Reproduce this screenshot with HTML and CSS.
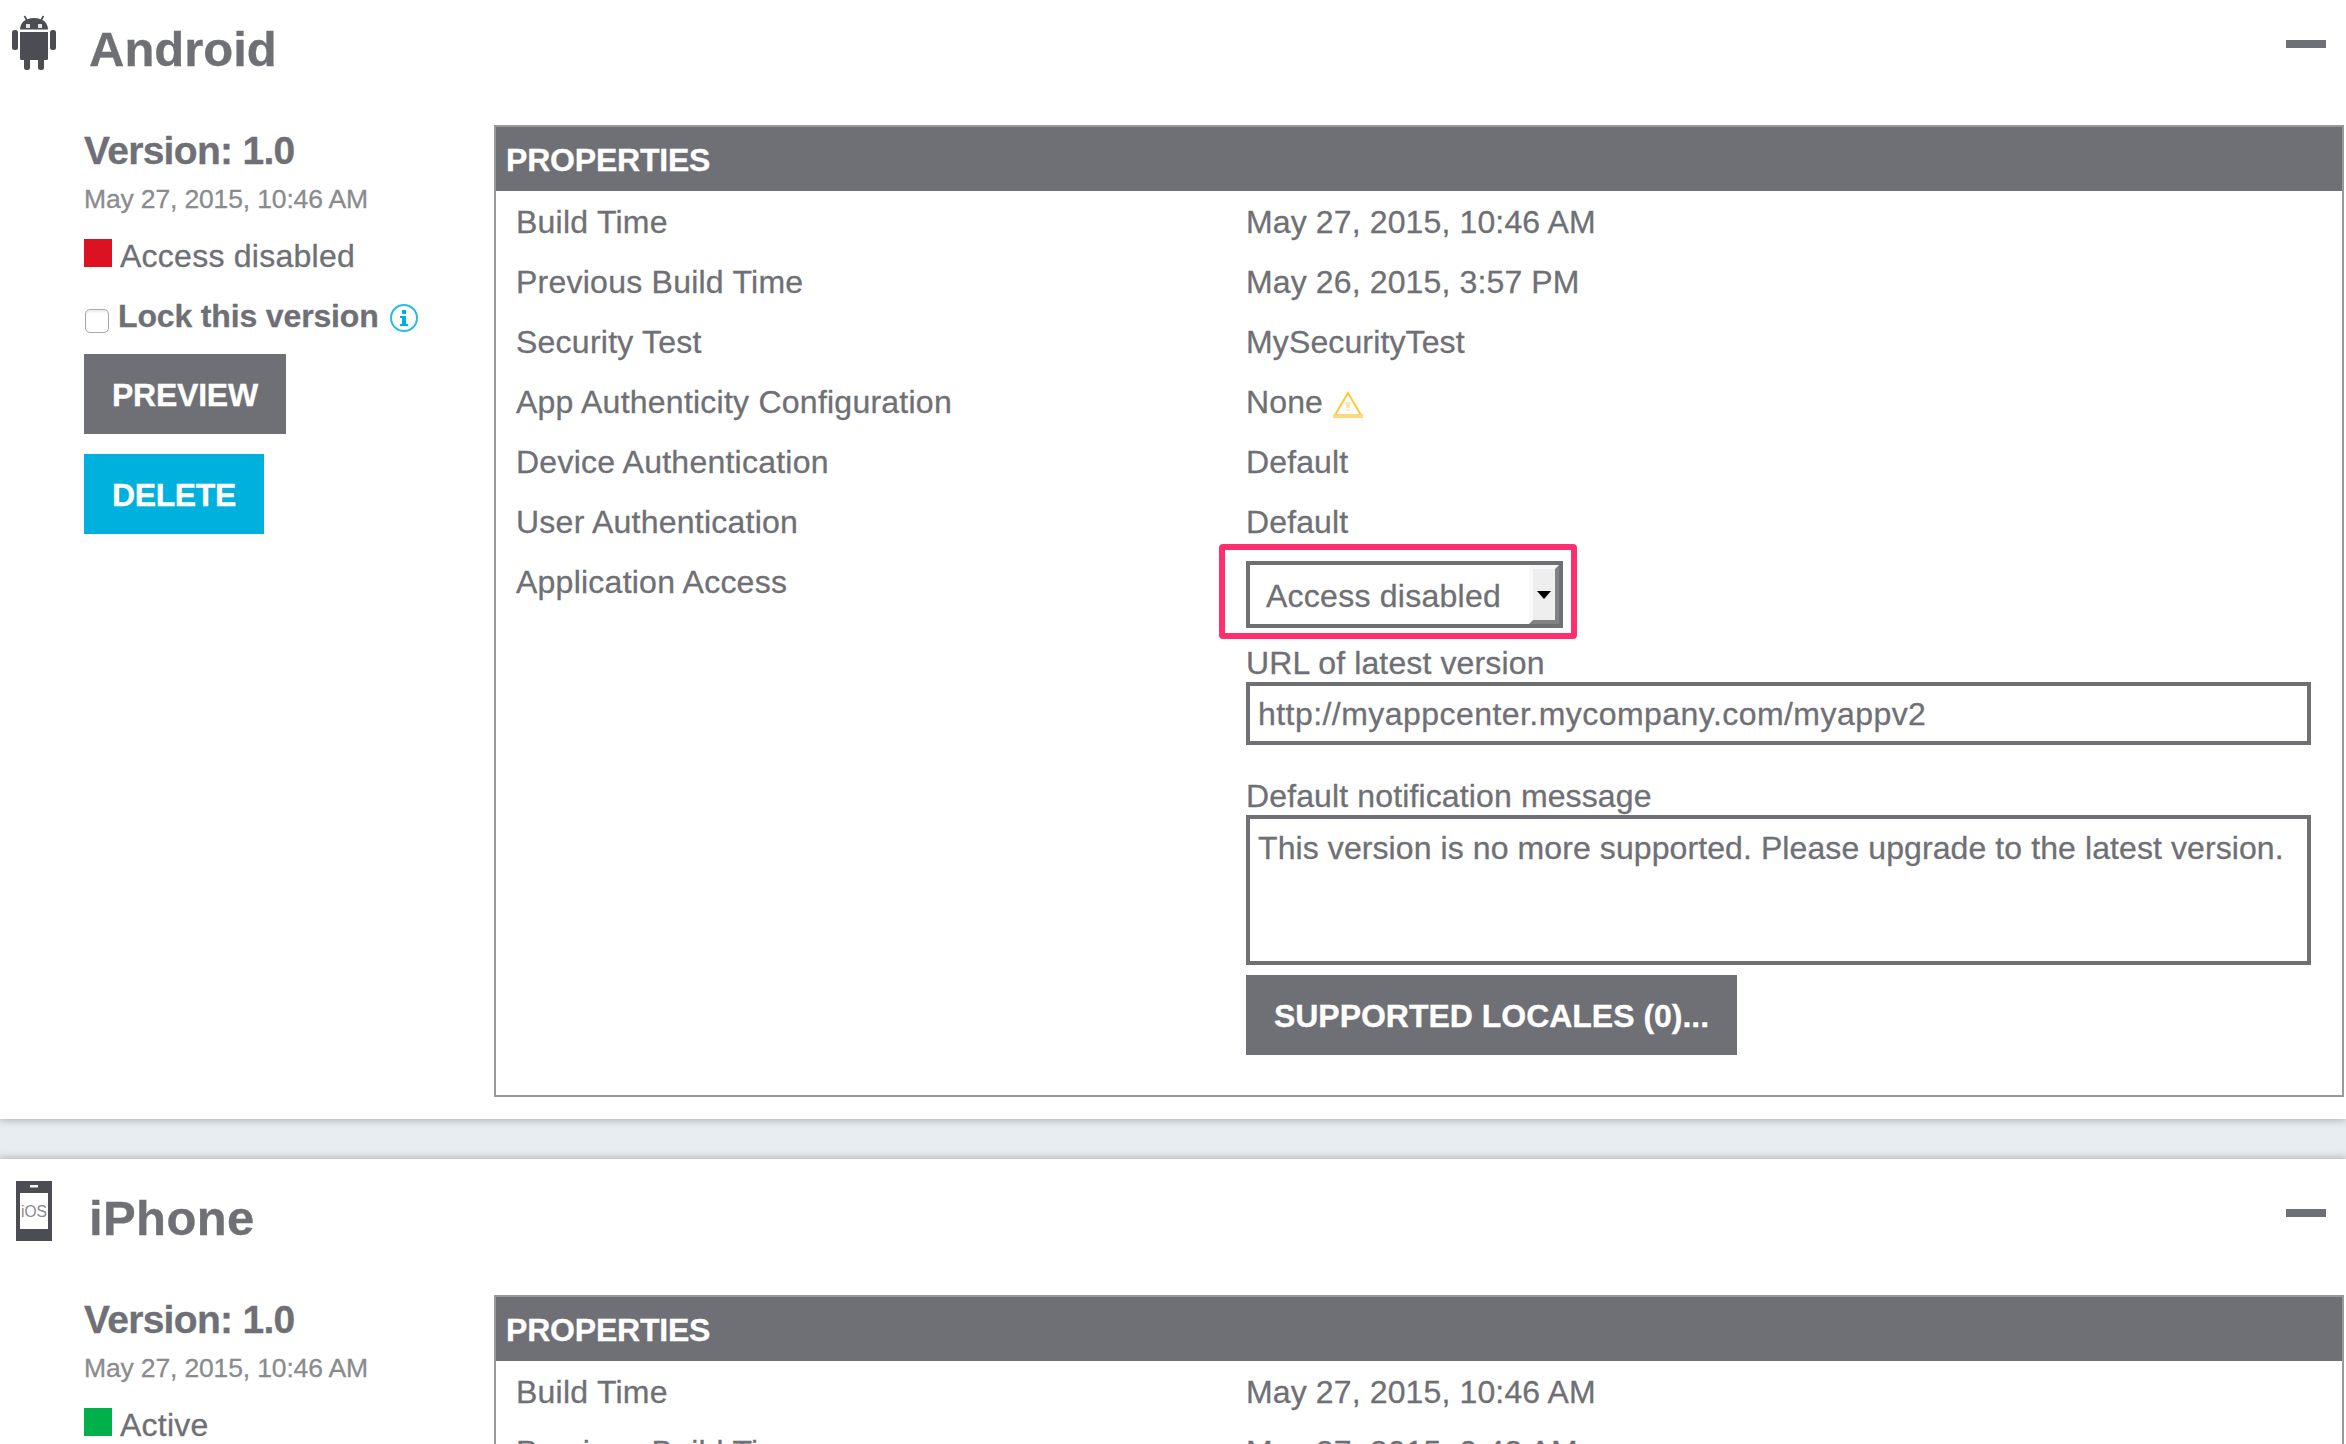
FILE: index.html
```
<!DOCTYPE html>
<html lang="en">
<head>
<meta charset="utf-8">
<title>Applications</title>
<link rel="stylesheet" href="styles.css">
</head>
<body>
<section class="platform platform-android">
  <header class="platform-head">
    <svg class="platform-icon" width="48" height="60" viewBox="0 0 48 60">
      <g fill="#4c4d53">
        <path d="M10 25.500C10 19 15 14 24 14s14 5 14 11.500z"/>
        <path d="M14.500 12l2.800 5M33.500 12l-2.800 5" stroke="#4c4d53" stroke-width="1.600"/>
        <path d="M10 28h28v26.500q0 1.500-1.500 1.500h-25Q10 56 10 54.500z"/>
        <rect x="2" y="26" width="6" height="20" rx="2.500"/>
        <rect x="40" y="26" width="6" height="20" rx="2.500"/>
        <rect x="14" y="52" width="6" height="14" rx="2.500"/>
        <rect x="28" y="52" width="6" height="14" rx="2.500"/>
      </g>
      <rect x="16" y="20" width="4" height="4" fill="#e4e4e5"/>
      <rect x="28" y="20" width="4" height="4" fill="#e4e4e5"/>
    </svg>
    <h2 class="platform-name">Android</h2>
    <span class="collapse"></span>
  </header>
  <div class="platform-body">
    <aside class="version">
      <h3 class="version-name">Version: 1.0</h3>
      <p class="version-date">May 27, 2015, 10:46 AM</p>
      <p class="status"><span class="swatch swatch-disabled"></span>Access disabled</p>
      <div class="lock">
        <span class="checkbox"></span>
        <span class="lock-label">Lock this version</span>
        <svg class="info" width="30" height="30" viewBox="0 0 30 30">
          <circle cx="15" cy="15" r="13" fill="none" stroke="#2bbbe2" stroke-width="2"/>
          <path d="M13 7h4v4h-4zM11 13h6v8h2v2h-8v-2h2v-6h-2z" fill="#00b0dd"/>
        </svg>
      </div>
      <button class="btn">PREVIEW</button>
      <button class="btn btn-primary">DELETE</button>
    </aside>
    <div class="panel">
      <h4 class="panel-title">PROPERTIES</h4>
      <dl class="props">
        <dt>Build Time</dt><dd>May 27, 2015, 10:46 AM</dd>
        <dt>Previous Build Time</dt><dd>May 26, 2015, 3:57 PM</dd>
        <dt>Security Test</dt><dd>MySecurityTest</dd>
        <dt>App Authenticity Configuration</dt>
        <dd>None <svg class="warn" width="32" height="28" viewBox="0 0 32 28">
          <path d="M3 25L16 3l13 22" fill="none" stroke="#fdc938" stroke-width="2"/>
          <path d="M1 24h30v4H1z" fill="#fbd97c"/>
          <path d="M14 12h4v6h-4z" fill="#fde6aa"/><path d="M14 19h4v2h-4z" fill="#fdecc0"/>
        </svg></dd>
        <dt>Device Authentication</dt><dd>Default</dd>
        <dt>User Authentication</dt><dd>Default</dd>
        <dt>Application Access</dt>
        <dd class="access">
          <div class="select">
            <span class="select-text">Access disabled</span>
            <span class="select-arrow"><svg width="14" height="8" viewBox="0 0 14 8"><path d="M0 0h14L7 8z"/></svg></span>
            <span class="highlight"></span>
          </div>
          <div class="field-label url-label">URL of latest version</div>
          <div class="input">http://myappcenter.mycompany.com/myappv2</div>
          <div class="field-label message-label">Default notification message</div>
          <div class="textarea">This version is no more supported. Please upgrade to the latest version.</div>
          <button class="btn btn-locales">SUPPORTED LOCALES (0)...</button>
        </dd>
      </dl>
    </div>
  </div>
</section>
<section class="platform platform-iphone">
  <header class="platform-head">
    <svg class="platform-icon" width="48" height="60" viewBox="0 0 48 60">
      <path d="M6 0h36v60H6z" fill="#4c4d53"/>
      <path d="M10 12h28v36H10z" fill="#fff"/>
      <path d="M20 4h8v2.500h-8z" fill="#f4f4f4"/>
      <text class="ios-text" x="11" y="36" textLength="26" lengthAdjust="spacingAndGlyphs">iOS</text>
    </svg>
    <h2 class="platform-name">iPhone</h2>
    <span class="collapse"></span>
  </header>
  <div class="platform-body">
    <aside class="version">
      <h3 class="version-name">Version: 1.0</h3>
      <p class="version-date">May 27, 2015, 10:46 AM</p>
      <p class="status"><span class="swatch swatch-active"></span>Active</p>
    </aside>
    <div class="panel">
      <h4 class="panel-title">PROPERTIES</h4>
      <dl class="props">
        <dt>Build Time</dt><dd>May 27, 2015, 10:46 AM</dd>
        <dt>Previous Build Time</dt><dd>May 27, 2015, 9:43 AM</dd>
      </dl>
    </div>
  </div>
</section>
</body>
</html>
```
FILE: styles.css
```
* { box-sizing: border-box; }
html { height: 1444px; overflow: hidden; }
body {
  display: flex;
  flex-direction: column;
  gap: 40px;
  margin: 0;
  height: 1444px;
  overflow: hidden;
  background: #e8edf1;
  color: #6f7076;
  font: 32px/36px "Liberation Sans", Arial, Helvetica, sans-serif;
  -webkit-text-stroke: 0.3px;
}
h2, h3, h4, p, dl, dt, dd { margin: 0; }
svg { display: block; overflow: visible; }

.platform {
  flex: none;
  background: #fff;
  box-shadow: 0 0 8px 1px #a9adb0;
}
.platform-android { height: 1129px; margin-top: -10px; }
.platform-iphone { height: 285px; overflow: hidden; }
.platform-head { display: flex; height: 136px; padding: 22px 20px 0 10px; }
.platform-android .platform-head { height: 135px; }
.platform-android .platform-icon { margin-top: -8px; }
.platform-name {
  flex: 1;
  padding: 8px 0 0 31px;
  font-size: 49px;
  line-height: 58px;
}
.platform-iphone .platform-name { letter-spacing: 0.4px; }
.collapse { width: 40px; height: 8px; margin-top: 28px; background: #6f7076; }
.platform-body { display: flex; padding-right: 2px; }

.version { width: 494px; padding-left: 84px; }
.platform-iphone .version { margin-top: -1px; }
.version-name { padding-top: 1px; font-size: 39px; line-height: 50px; letter-spacing: -0.7px; }
.version-date { margin-top: 5px; font-size: 26.500px; line-height: 37px; letter-spacing: -0.15px; color: #8a8b90; }
.status { display: flex; align-items: flex-start; height: 36px; margin-top: 19px; line-height: 39px; letter-spacing: 0.25px; }
.swatch { width: 28px; height: 28px; margin: 2px 8px 0 0; }
.swatch-disabled { background: #dc1122; }
.swatch-active { background: #00b04b; }
.lock { display: flex; align-items: flex-start; height: 56px; margin-top: 25px; }
.checkbox {
  width: 24px;
  height: 24px;
  margin: 11px 9px 0 1px;
  border: 1.500px solid #aaa;
  border-radius: 5px;
  box-shadow: inset 0 2px 2px #ececec;
}
.lock-label { font-weight: bold; letter-spacing: -0.15px; }
.info { margin: 5px 0 0 10px; }

.btn {
  display: block;
  width: fit-content;
  height: 80px;
  margin: 0 0 20px;
  padding: 0 28px;
  border: 0;
  background: #6f7076;
  color: #fff;
  font: bold 32px/82px "Liberation Sans", Arial, Helvetica, sans-serif;
  letter-spacing: -0.25px;
  white-space: nowrap;
}
.btn-primary { background: #00b0dd; letter-spacing: -0.4px; }

.panel { flex: 1; height: 972px; border: 2px solid #98999d; }
.panel-title {
  height: 64px;
  padding-left: 10px;
  background: #6f7076;
  color: #fff;
  font-size: 32px;
  line-height: 67px;
  letter-spacing: -0.2px;
}
.props {
  display: grid;
  grid-template-columns: 730px 1fr;
  grid-auto-rows: minmax(60px, auto);
  padding: 1px 31px 0 20px;
  line-height: 60px;
  letter-spacing: 0.13px;
}
.props dt { letter-spacing: 0.24px; }
.warn { display: inline-block; vertical-align: -5px; }
.access { padding-top: 9px; line-height: 36px; }
.select {
  position: relative;
  display: flex;
  width: 317px;
  height: 67px;
  border: 4px solid #6f7076;
}
.select-text { flex: 1; padding-left: 16px; line-height: 62px; letter-spacing: 0.25px; }
.select-arrow {
  display: flex;
  align-items: center;
  justify-content: center;
  width: 30px;
  border: 4px solid;
  border-color: #f9f9f9 #808284 #808284 #f9f9f9;
  background: #eee;
}
.highlight {
  position: absolute;
  inset: -21px -18px -15px -31px;
  border: 6px solid #ff2e6e;
  border-radius: 4px;
}
.url-label { margin-top: 17px; }
.message-label { margin-top: 33px; }
.input, .textarea { margin-top: 1px; border: 4px solid #6f7076; padding: 0 8px; }
.input { height: 63px; line-height: 57px; letter-spacing: 0.45px; }
.textarea { height: 150px; line-height: 58px; letter-spacing: 0.09px; white-space: nowrap; }
.btn-locales { width: 491px; margin-top: 10px; padding: 0; letter-spacing: -0.02px; }
.ios-text { font: 16px "Liberation Sans", Arial, sans-serif; fill: #88898d; }
```
